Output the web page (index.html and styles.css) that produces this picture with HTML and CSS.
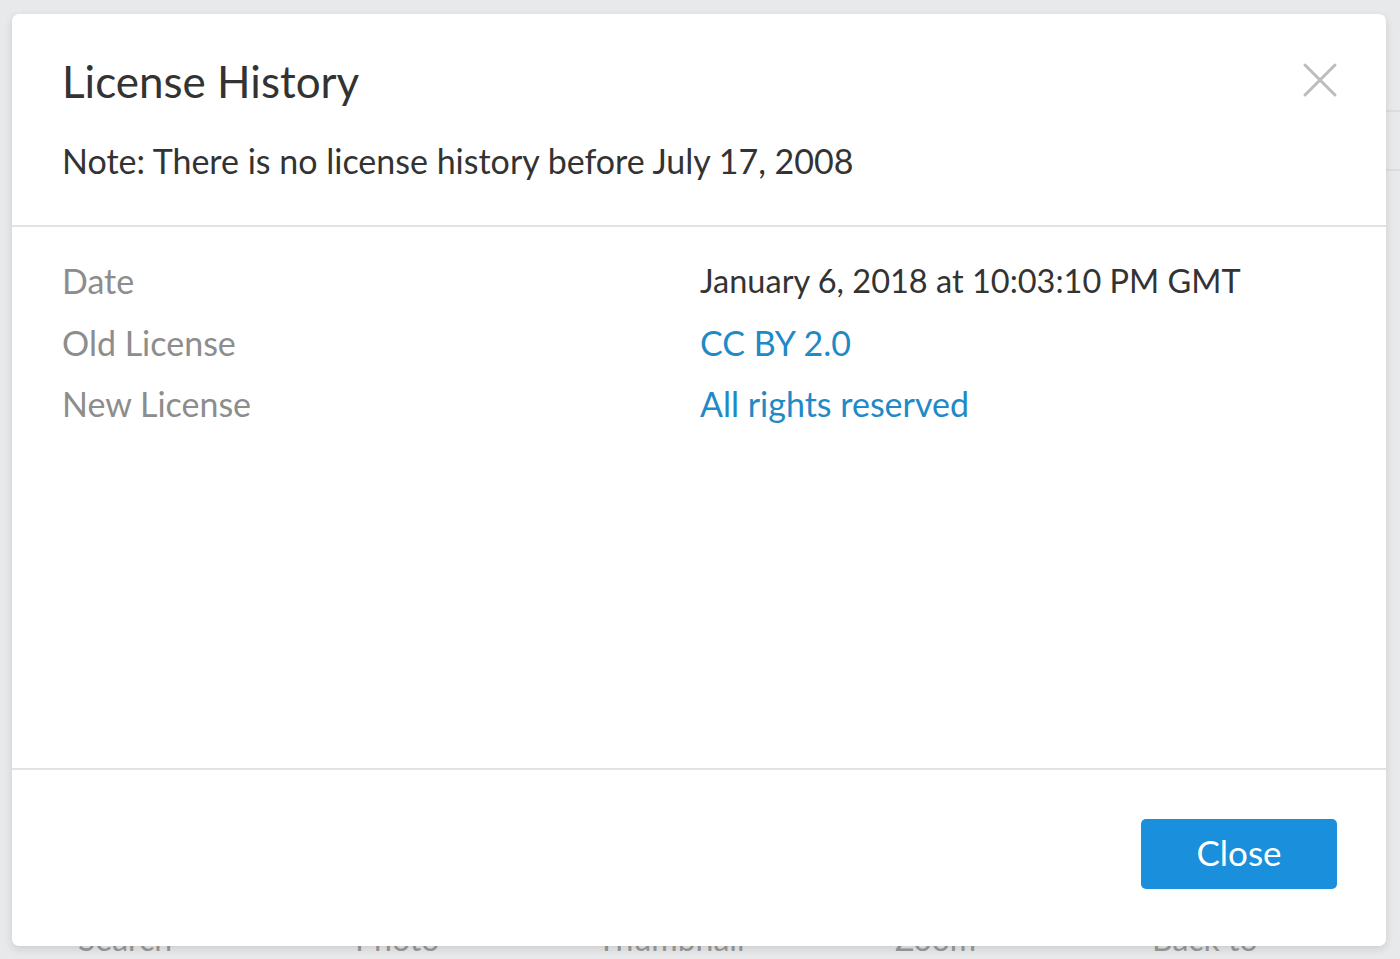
FILE: index.html
```html
<!DOCTYPE html>
<html>
<head>
<meta charset="utf-8">
<link rel="stylesheet" href="styles.css">
</head>
<body>
<div class="page">
  <div class="page-lines">
    <div class="page-line one"></div>
    <div class="page-line two"></div>
  </div>
  <nav class="page-nav">
    <span>Search</span>
    <span>Photo</span>
    <span>Thumbnail</span>
    <span>Zoom</span>
    <span>Back to</span>
  </nav>
</div>
<div class="modal">
  <header class="modal-header">
    <div class="title-row">
      <h1 class="title">License History</h1>
      <button class="close-x" aria-label="Close">
        <svg width="36" height="36" viewBox="0 0 36 36"><path d="M3 3 L33 33 M33 3 L3 33" stroke="#bdbdbd" stroke-width="3" stroke-linecap="round" fill="none"/></svg>
      </button>
    </div>
    <p class="note">Note: There is no license history before July 17, 2008</p>
  </header>
  <section class="modal-body">
    <div class="row"><span class="label">Date</span><span class="value date">January 6, 2018 at 10:03:10 PM GMT</span></div>
    <div class="row"><span class="label">Old License</span><a class="value link" href="#">CC BY 2.0</a></div>
    <div class="row"><span class="label">New License</span><a class="value link" href="#">All rights reserved</a></div>
  </section>
  <footer class="modal-footer">
    <button class="btn-close">Close</button>
  </footer>
</div>
</body>
</html>
```
FILE: styles.css
```css
html, body {
  margin: 0;
  padding: 0;
}
body {
  width: 1400px;
  height: 959px;
  overflow: hidden;
  background: #e8e9ea;
  font-family: Lato, "Open Sans", sans-serif;
  position: relative;
}
.page {
  height: 959px;
  display: flex;
  flex-direction: column;
  justify-content: flex-end;
}
.page-lines {
  position: absolute;
  right: 0;
  top: 0;
  width: 30px;
}
.page-line {
  position: absolute;
  right: 0;
  width: 30px;
  height: 2px;
  background: #dcdddf;
}
.page-line.one { top: 110px; }
.page-line.two { top: 169px; }
.page-nav {
  display: flex;
  padding: 0 0 0 78px;
  height: 40px;
  color: #9a9b9c;
  font-size: 32px;
}
.page-nav span:nth-child(1) { width: 277px; }
.page-nav span:nth-child(2) { width: 242px; }
.page-nav span:nth-child(3) { width: 298px; }
.page-nav span:nth-child(4) { width: 257px; }
.modal {
  position: absolute;
  left: 12px;
  top: 14px;
  width: 1374px;
  height: 932px;
  background: #fff;
  border-radius: 7px;
  box-shadow: 0 3px 8px rgba(0,0,0,0.12);
  display: flex;
  flex-direction: column;
}
.modal-header {
  padding: 0 48px 0 50px;
  height: 211px;
  border-bottom: 2px solid #e1e2e3;
}
.title-row {
  display: flex;
  justify-content: space-between;
  align-items: flex-start;
  padding-top: 41px;
}
.title {
  margin: 0;
  font-weight: 400;
  font-size: 44px;
  line-height: 52px;
  color: #333;
}
.close-x {
  border: 0;
  background: none;
  padding: 0;
  margin-top: 7px;
  width: 36px;
  height: 36px;
}
.note {
  margin: 34px 0 0;
  font-size: 34px;
  line-height: 40px;
  color: #333;
}
.modal-body {
  flex: 1;
  padding: 34px 50px 0;
  border-bottom: 2px solid #e1e2e3;
}
.row {
  display: flex;
  height: 61.5px;
  font-size: 34px;
  line-height: 40px;
}
.label {
  width: 638px;
  color: #8d8d8d;
}
.value {
  color: #333;
}
.date {
  font-size: 32.5px;
}
.link {
  color: #1f8ac6;
  text-decoration: none;
}
.modal-footer {
  height: 176px;
  display: flex;
  justify-content: flex-end;
  align-items: flex-start;
  padding: 49px 49px 0 0;
  box-sizing: border-box;
}
.btn-close {
  width: 196px;
  height: 70px;
  border: 0;
  border-radius: 5px;
  background: #1a8fdc;
  color: #fff;
  font-family: inherit;
  font-size: 35px;
  line-height: 66px;
  padding: 0 0 4px;
}
```
